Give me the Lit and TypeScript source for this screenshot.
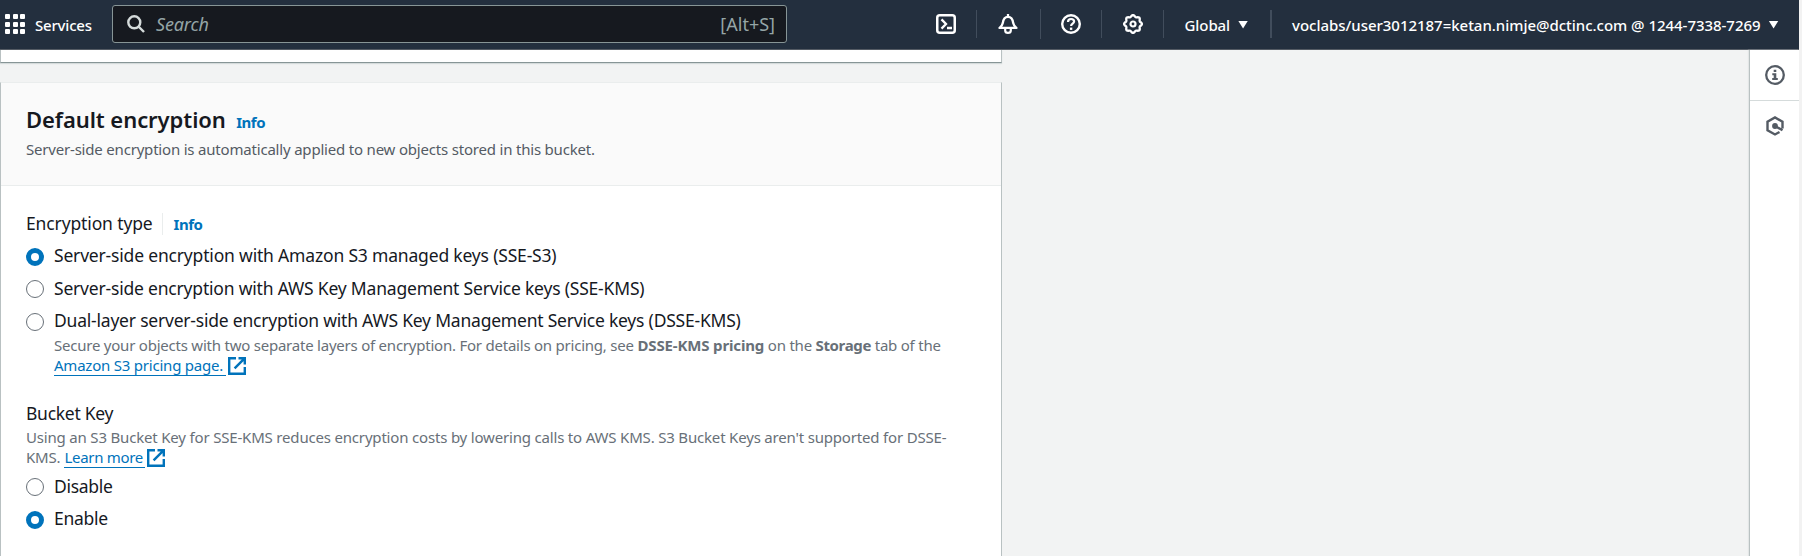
import { LitElement, html, css, svg } from "lit";
import { customElement, property } from "lit/decorators.js";
import { classMap } from "lit/directives/class-map.js";

const externalIcon = html`<svg class="ext" width="18" height="18" viewBox="0 0 18 18" fill="none" stroke="#0073bb" stroke-width="2.4">
  <path d="M8 1.2H1.2v15.6h15.6V10M10.5 1.2h6.3v6.3M16.8 1.2 6.6 11.4" /></svg>`;

// Closed outline with eight rounded teeth around the centre of a 20-unit box.
const gearPath = "M" + Array.from({ length: 72 }, (_, i) => {
  const a = (i * 5 * Math.PI) / 180;
  const r = 8.1 + 0.85 * Math.cos(8 * a);
  return `${(10 + r * Math.sin(a)).toFixed(2)} ${(10 - r * Math.cos(a)).toFixed(2)}`;
}).join("L") + "Z";

const icons = {
  terminal: svg`<rect x="1.25" y="1.25" width="17.5" height="17.5" rx="2.5"/><path d="M5.5 5.4 10 10l-4.500 4.600M11 14h5" stroke-width="2.300"/>`,
  bell: svg`<path d="M1.500 13.900h17c-2-1.200-2.800-2.400-3.300-4.800C14.700 5 13 2.900 10 2.900S5.300 5 4.800 9.100c-.5 2.400-1.300 3.600-3.300 4.800zM10 0v3" stroke-width="2.300" stroke-linejoin="round"/><path d="M7.200 15v1.400a2.800 2.400 0 0 0 5.600 0V15" stroke-width="2.200"/>`,
  help: svg`<circle cx="10" cy="10" r="8.800" stroke-width="2.400"/><path d="M7 8c0-2 1.300-3 3.100-3s3 1 3 2.600c0 2.100-3 2.200-3 4.500" stroke-width="2.200"/><path d="M10.100 13.600v2.300" stroke-width="2.400"/>`,
  gear: svg`<path d=${gearPath} stroke-width="2.300"/><circle cx="10" cy="10" r="2.500" stroke-width="2.200"/>`,
};

@customElement("console-radio")
export class ConsoleRadio extends LitElement {
  @property({ type: Boolean }) checked = false;
  static styles = css`
    :host { display: flex; align-items: center; gap: 10px; height: 22px; font-size: 17.5px; line-height: 22px; color: #16191f; white-space: nowrap; }
    .dot { box-sizing: border-box; flex: none; width: 18px; height: 18px; margin-top: 3px; border: 1.500px solid #687078; border-radius: 50%; background: #fff; }
    .on { border: 5.500px solid #0073bb; }
  `;
  render() {
    return html`<span class=${classMap({ dot: true, on: this.checked })}></span><slot></slot>`;
  }
}

@customElement("app-root")
export class AppRoot extends LitElement {
  static styles = css`
    * { box-sizing: border-box; }
    :host { display: block; height: 556px; overflow: hidden; padding-right: 3px; background: #f2f2f2;
      font-family: "Noto Sans", "Open Sans", sans-serif; font-size: 15px; color: #16191f; white-space: nowrap; }
    .page { display: flex; flex-direction: column; height: 556px; }
    .bar { display: flex; align-items: center; flex: none; height: 50px; background: #232f3e; border-bottom: 1px solid #545b64; color: #fff; font-weight: 500; line-height: 20px; }
    .grid { display: grid; grid-template-columns: repeat(3, 5px); gap: 2.500px; margin: -1px 10px 0 5px; }
    .grid i { height: 5px; border-radius: 1px; background: #fff; }
    .services { width: 77px; letter-spacing: -0.200px; }
    .search { display: flex; align-items: center; width: 675px; height: 38px; padding: 0 11px 0 14px; margin-top: -1px; border: 1px solid #879596; border-radius: 3px; background: #16191f;
      color: #95a5a6; font-size: 18px; font-weight: 400; line-height: 24px; }
    .search em { flex: 1; margin-left: 11px; letter-spacing: -0.150px; }
    .search kbd { font: inherit; letter-spacing: 0; }
    .tools { display: flex; align-items: center; margin: -1px 0 0 149px; }
    .sep { width: 1px; height: 28px; background: #414d5c; }
    .s1 { margin: 0 21px 0 20px; }
    .s2 { height: 30px; margin: 0 20px 0 22px; }
    .s3 { margin: 0 21px 0 20px; }
    .s4 { margin: 0 20.500px 0 20px; }
    .thick { width: 2px; margin: 0 20px 0 22px; }
    .menu { display: flex; align-items: center; gap: 8px; padding-top: 1px; }
    .global { letter-spacing: -0.080px; }
    .user { letter-spacing: -0.030px; }
    .caret { width: 10px; height: 8px; background: #fff; clip-path: polygon(0 0, 100% 0, 50% 100%); }
    .body { display: flex; flex: 1; min-height: 0; }
    .main { flex: 1; background: #f2f3f3; }
    .stack { display: flex; flex-direction: column; gap: 19px; width: 1002px; height: 100%; }
    .card { border: solid #b9c1c2; border-width: 0 1px; background: #fff; }
    .prev { flex: none; height: 13px; border-bottom: 1px solid #879596; box-shadow: 0 1px 1px #d5dbdb; }
    .encryption { flex: 1; border-top: 1px solid #eaeded; }
    .head { height: 103px; padding: 21px 25px 0; background: #fafafa; border-bottom: 1px solid #eaeded; }
    .title { display: flex; align-items: baseline; gap: 10.500px; height: 30px; margin-bottom: 5px; line-height: 30px; }
    .title h2 { margin: 0; font-size: 22px; font-weight: 600; letter-spacing: -0.070px; }
    .info { color: #0073bb; font-size: 15px; font-weight: 700; letter-spacing: -0.500px; }
    .desc { color: #545b64; line-height: 20px; letter-spacing: -0.195px; }
    .form { padding: 26px 25px 0; }
    .label { display: flex; align-items: baseline; height: 22px; line-height: 22px; font-size: 17.500px; }
    .type { letter-spacing: -0.130px; }
    .bucket { margin-top: 26px; letter-spacing: -0.280px; }
    .vr { align-self: center; width: 1px; height: 22px; margin: 1px 11px 0 9px; background: #eaeded; }
    .options { display: flex; flex-direction: column; gap: 10.500px; margin-top: 10px; }
    .r1 { letter-spacing: -0.180px; }
    .r2 { letter-spacing: -0.195px; }
    .r3 { letter-spacing: -0.212px; }
    .r4 { letter-spacing: -0.300px; }
    .help { color: #687078; line-height: 20px; letter-spacing: -0.226px; }
    .layers { margin: 4px 0 0 28px; }
    .bold { letter-spacing: -0.150px; }
    .stor { letter-spacing: -0.360px; }
    .keyhelp { margin-top: 3px; letter-spacing: -0.182px; }
    .line { display: flex; }
    .keys { margin-top: 6.500px; }
    .link { display: inline-block; height: 21px; border-bottom: 1px solid #0073bb; color: #0073bb; }
    .pricing { width: 172px; letter-spacing: -0.220px; }
    .learn { width: 81px; margin-left: 4px; letter-spacing: -0.300px; }
    .ext { margin: 2px 0 0 2px; }
    .side { flex: none; width: 50px; border-left: 1px solid #b9c1c2; background: #fff; box-shadow: -1px 0 1px #e3e6e6; }
    .tool { display: flex; align-items: center; justify-content: center; height: 50px; }
    .tool:first-child { height: 51px; border-bottom: 1px solid #d5dbdb; }
  `;

  private icon(name: keyof typeof icons) {
    return html`<svg width="20" height="20" viewBox="0 0 20 20" fill="none" stroke="#fff" stroke-width="2.5">${icons[name]}</svg>`;
  }

  render() {
    return html`<div class="page">
      <header class="bar">
        <div class="grid">${Array.from({ length: 9 }, () => html`<i></i>`)}</div>
        <span class="services">Services</span>
        <div class="search">
          <svg width="18" height="18" viewBox="0 0 18 18" fill="none" stroke="#d5dbdb" stroke-width="2.4"><circle cx="7.300" cy="7.300" r="6"/><path d="m11.500 11.500 5.500 5.500"/></svg>
          <em>Search</em><kbd>[Alt+S]</kbd>
        </div>
        <div class="tools">
          ${this.icon("terminal")}<span class="sep s1"></span>
          ${this.icon("bell")}<span class="sep s2"></span>
          ${this.icon("help")}<span class="sep s3"></span>
          ${this.icon("gear")}<span class="sep s4"></span>
          <span class="menu"><span class="global">Global</span><i class="caret"></i></span>
          <span class="sep thick"></span>
          <span class="menu"><span class="user">voclabs/user3012187=ketan.nimje@dctinc.com @ 1244-7338-7269</span><i class="caret"></i></span>
        </div>
      </header>
      <div class="body">
        <main class="main"><div class="stack">
          <section class="card prev"></section>
          <section class="card encryption">
            <div class="head">
              <div class="title"><h2>Default encryption</h2><span class="info">Info</span></div>
              <div class="desc">Server-side encryption is automatically applied to new objects stored in this bucket.</div>
            </div>
            <div class="form">
              <div class="label"><span class="type">Encryption type</span><i class="vr"></i><span class="info">Info</span></div>
              <div class="options">
                <console-radio class="r1" checked>Server-side encryption with Amazon S3 managed keys (SSE-S3)</console-radio>
                <console-radio class="r2">Server-side encryption with AWS Key Management Service keys (SSE-KMS)</console-radio>
                <console-radio class="r3">Dual-layer server-side encryption with AWS Key Management Service keys (DSSE-KMS)</console-radio>
              </div>
              <div class="help layers">
                <div>Secure your objects with two separate layers of encryption. For details on pricing, see <b class="bold">DSSE-KMS pricing</b> on the <b class="stor">Storage</b> tab of the</div>
                <div class="line"><a class="link pricing">Amazon S3 pricing page.</a>${externalIcon}</div>
              </div>
              <div class="label bucket">Bucket Key</div>
              <div class="help keyhelp">
                <div>Using an S3 Bucket Key for SSE-KMS reduces encryption costs by lowering calls to AWS KMS. S3 Bucket Keys aren't supported for DSSE-</div>
                <div class="line"><span>KMS.</span><a class="link learn">Learn more</a>${externalIcon}</div>
              </div>
              <div class="options keys">
                <console-radio class="r4">Disable</console-radio>
                <console-radio class="r4" checked>Enable</console-radio>
              </div>
            </div>
          </section>
        </div></main>
        <aside class="side">
          <div class="tool"><svg width="20" height="20" viewBox="0 0 20 20"><circle cx="10" cy="10" r="8.800" fill="none" stroke="#545b64" stroke-width="2.300"/><path d="M8.700 4.700h2.600v2.300H8.700zM7.300 8.300h4v4.700h1.500v2H7.200v-2h1.500v-2.700H7.300z" fill="#545b64"/></svg></div>
          <div class="tool"><svg width="20" height="20" viewBox="0 0 20 20" fill="none" stroke="#545b64" stroke-width="2.400"><path d="M17.500 12.500v-6.700L10 1.500 2.500 5.800v8.500L10 18.500l4.500-2.500M10 10l7.500 4.300"/><circle cx="10" cy="10" r="1.700" fill="#545b64"/></svg></div>
        </aside>
      </div>
    </div>`;
  }
}
